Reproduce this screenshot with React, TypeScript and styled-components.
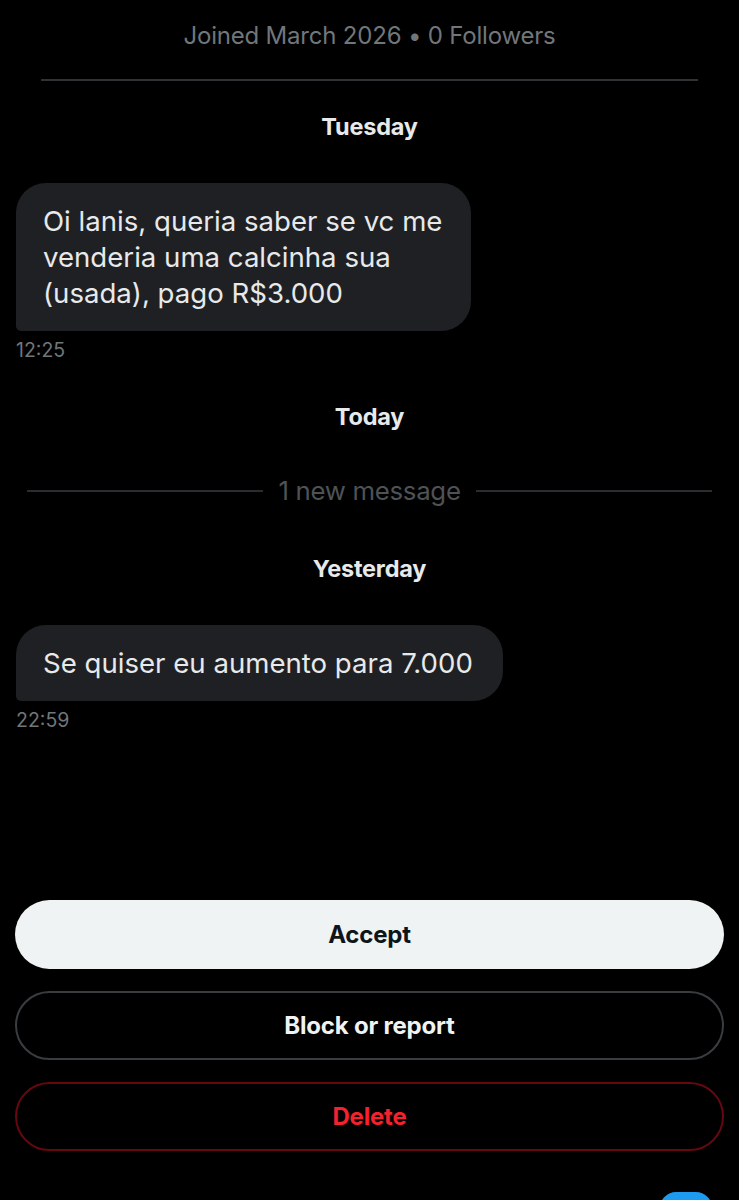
import React from "react";
import styled, { createGlobalStyle } from "styled-components";

const GlobalStyle = createGlobalStyle`
  html, body { margin: 0; padding: 0; background: #000; }
  body { font-family: Inter, "Noto Sans", "Liberation Sans", sans-serif; -webkit-font-smoothing: antialiased; }
  * { box-sizing: border-box; }
`;

const Page = styled.div`
  position: relative;
  height: 1200px;
  overflow: hidden;
  background: #000;
  display: flex;
  flex-direction: column;
`;

const JoinedInfo = styled.div`
  padding-top: 21px;
  text-align: center;
  font-size: 24px;
  line-height: 30px;
  color: #71767b;
  letter-spacing: -0.2px;
`;

const Divider = styled.hr`
  margin: 28px 41px 0;
  border: none;
  height: 2px;
  background: #2f3336;
`;

const DateLabel = styled.div<{ $top: number }>`
  margin-top: ${(p) => p.$top}px;
  text-align: center;
  font-size: 23.5px;
  line-height: 28px;
  font-weight: 700;
  color: #e7e9ea;
  letter-spacing: -0.2px;
`;

const MessageGroup = styled.div<{ $top: number }>`
  margin-top: ${(p) => p.$top}px;
  padding: 0 16px;
  display: flex;
  flex-direction: column;
  align-items: flex-start;
`;

const Bubble = styled.div<{ $width: number }>`
  width: ${(p) => p.$width}px;
  background: #1f2023;
  color: #e7e9ea;
  font-size: 27.6px;
  line-height: 36px;
  padding: 20px 20px 20px 27px;
  border-radius: 30px 30px 30px 5px;
`;

const Time = styled.div`
  margin-top: 8px;
  font-size: 19.5px;
  line-height: 22px;
  color: #71767b;
`;

const NewMessageRow = styled.div`
  margin-top: 45px;
  padding: 0 27px;
  display: flex;
  align-items: center;
  gap: 15px;
`;

const Line = styled.div`
  flex: 1;
  height: 2px;
  background: #2a2d30;
`;

const NewMessageText = styled.span`
  font-size: 25.8px;
  line-height: 30px;
  color: #4e5256;
  letter-spacing: -0.3px;
`;

const Actions = styled.div`
  margin-top: auto;
  padding: 0 15px 49px;
  display: flex;
  flex-direction: column;
  gap: 22px;
`;

type Variant = "primary" | "outline" | "danger";

const ActionButton = styled.button<{ $variant: Variant }>`
  height: 69px;
  width: 100%;
  border-radius: 35px;
  font-family: inherit;
  font-size: 24px;
  font-weight: 700;
  letter-spacing: -0.2px;
  cursor: pointer;
  background: ${(p) => (p.$variant === "primary" ? "#eff3f4" : "#000")};
  color: ${(p) =>
    p.$variant === "primary" ? "#0f1419" : p.$variant === "danger" ? "#f4212e" : "#eff3f4"};
  border: ${(p) =>
    p.$variant === "primary"
      ? "none"
      : p.$variant === "danger"
      ? "2px solid #67070f"
      : "2px solid #3a3d40"};
`;

const Fab = styled.div`
  position: absolute;
  left: 660px;
  top: 1192px;
  width: 52px;
  height: 52px;
  border-radius: 16px;
  background: #1d9bf0;
`;

export default function App() {
  return (
    <>
      <GlobalStyle />
      <Page>
        <JoinedInfo>Joined March 2026 • 0 Followers</JoinedInfo>
        <Divider />
        <DateLabel $top={32}>Tuesday</DateLabel>
        <MessageGroup $top={42}>
          <Bubble $width={455}>
            Oi lanis, queria saber se vc me venderia uma calcinha sua (usada), pago R$3.000
          </Bubble>
          <Time>12:25</Time>
        </MessageGroup>
        <DateLabel $top={42}>Today</DateLabel>
        <NewMessageRow>
          <Line />
          <NewMessageText>1 new message</NewMessageText>
          <Line />
        </NewMessageRow>
        <DateLabel $top={49}>Yesterday</DateLabel>
        <MessageGroup $top={42}>
          <Bubble $width={487}>Se quiser eu aumento para 7.000</Bubble>
          <Time>22:59</Time>
        </MessageGroup>
        <Actions>
          <ActionButton $variant="primary">Accept</ActionButton>
          <ActionButton $variant="outline">Block or report</ActionButton>
          <ActionButton $variant="danger">Delete</ActionButton>
        </Actions>
        <Fab />
      </Page>
    </>
  );
}
